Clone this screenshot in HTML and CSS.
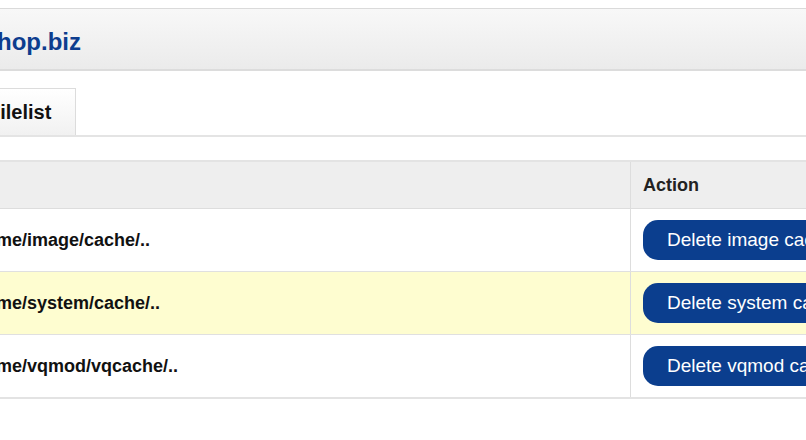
FILE: index.html
```html
<!DOCTYPE html>
<html>
<head>
<meta charset="utf-8">
<link rel="stylesheet" href="styles.css">
</head>
<body>
<div class="page">
  <div class="header"><h1 class="title">myshop.biz</h1></div>
  <div class="content">
    <div class="tabs"><div class="tab">Filelist</div></div>
    <table class="list">
      <thead>
        <tr><th class="col-path"></th><th class="col-action">Action</th></tr>
      </thead>
      <tbody>
        <tr><td class="path">/home/image/cache/..</td><td class="action"><button class="btn">Delete image cache</button></td></tr>
        <tr class="hl"><td class="path">/home/system/cache/..</td><td class="action"><button class="btn">Delete system cache</button></td></tr>
        <tr><td class="path">/home/vqmod/vqcache/..</td><td class="action"><button class="btn">Delete vqmod cache</button></td></tr>
      </tbody>
    </table>
  </div>
</div>
</body>
</html>
```
FILE: styles.css
```css
html, body {
  margin: 0;
  padding: 0;
  overflow: hidden;
  background: #ffffff;
  font-family: "Liberation Sans", Arial, sans-serif;
}
.page {
  margin-left: -60px;
  width: 1100px;
  padding-top: 8px;
}
.header {
  height: 60px;
  border-top: 1px solid #dadada;
  border-bottom: 2px solid #dcdcdc;
  background: linear-gradient(#f8f8f8, #ebebeb);
  display: flex;
  align-items: center;
  padding-left: 9px;
}
.title {
  margin: 5px 0 0 0;
  font-size: 24px;
  font-weight: bold;
  color: #0d3d8e;
}
.content {
  padding-left: 21px;
}
.tabs {
  margin-top: 17px;
  border-bottom: 2px solid #e4e4e4;
  display: flex;
}
.tab {
  height: 46px;
  line-height: 46px;
  padding: 0 24px 0 26px;
  border: 1px solid #dcdcdc;
  border-bottom: none;
  background: linear-gradient(#ffffff, #f1f1f1);
  font-size: 20px;
  font-weight: bold;
  color: #111;
}
.list {
  margin-top: 23px;
  border-collapse: collapse;
  width: 1000px;
  border-top: 2px solid #e3e3e3;
  border-bottom: 2px solid #e3e3e3;
}
.list th {
  background: #eeeeee;
  height: 46px;
  text-align: left;
  font-size: 18px;
  font-weight: bold;
  color: #222;
  padding: 0 12px;
  border-bottom: 1px solid #dddddd;
}
.col-path { width: 645px; }
.list th + th, .list td + td {
  border-left: 1px solid #dddddd;
}
.list td {
  height: 62px;
  padding: 0 12px;
  border-bottom: 1px solid #e0e0e0;
  font-size: 18px;
}
.list tbody tr:last-child td { border-bottom: none; }
.path {
  font-weight: bold;
  color: #111;
  padding-left: 8px;
}
.list td.path { padding-left: 8px; }
.hl td { background: #fefdd0; }
.btn {
  height: 40px;
  padding: 0 24px;
  border: none;
  border-radius: 15px;
  background: #0b3e8e;
  color: #ffffff;
  font-family: "Liberation Sans", Arial, sans-serif;
  font-size: 19px;
  white-space: nowrap;
  display: block;
}
```
